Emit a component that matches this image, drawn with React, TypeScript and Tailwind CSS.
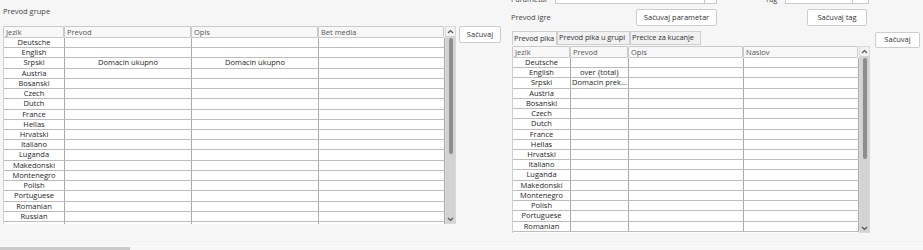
import React from "react";

const langs = [
  "Deutsche", "English", "Srpski", "Austria", "Bosanski", "Czech", "Dutch", "France", "Hellas",
  "Hrvatski", "Italiano", "Luganda", "Makedonski", "Montenegro", "Polish", "Portuguese", "Romanian", "Russian",
];

type Col = { title: string; w: string };

const groupCols: Col[] = [
  { title: "Jezik", w: "w-[61px]" },
  { title: "Prevod", w: "w-[127px]" },
  { title: "Opis", w: "w-[127px]" },
  { title: "Bet media", w: "w-[126px]" },
];

const gameCols: Col[] = [
  { title: "Jezik", w: "w-[58px]" },
  { title: "Prevod", w: "w-[58px]" },
  { title: "Opis", w: "w-[115px]" },
  { title: "Naslov", w: "w-[115px]" },
];

// values by language, one entry per column after Jezik
const groupData: Record<string, string[]> = {
  Srpski: ["Domacin ukupno", "Domacin ukupno", ""],
};
const gameData: Record<string, string[]> = {
  English: ["over {total}", "", ""],
  Srpski: ["Domacin prek...", "", ""],
};

function Chevron({ down }: { down?: boolean }) {
  return (
    <svg width="7" height="5" viewBox="0 0 7 5" className="shrink-0">
      <path
        d={down ? "M1 1 L3.5 3.5 L6 1" : "M1 4 L3.5 1.5 L6 4"}
        fill="none"
        stroke="#555"
        strokeWidth="1.2"
      />
    </svg>
  );
}

function ScrollBar({ thumb }: { thumb: string }) {
  return (
    <div className="flex w-[11px] shrink-0 flex-col items-center border border-[#d9d9d9] bg-[#d3d3d3]">
      <div className="flex h-[9px] w-full items-center justify-center bg-[#f2f2f2]">
        <Chevron />
      </div>
      <div className={`w-[4px] rounded-[2px] bg-[#8d8d8d] ${thumb}`} />
      <div className="flex-1" />
      <div className="flex h-[8px] w-full items-center justify-center">
        <Chevron down />
      </div>
    </div>
  );
}

function Grid({
  cols,
  data,
  rows,
  bodyH,
  thumb,
}: {
  cols: Col[];
  data: Record<string, string[]>;
  rows: string[];
  bodyH: string;
  thumb: string;
}) {
  return (
    <div className="flex">
      <div className="flex flex-col">
        {/* header */}
        <div className="flex h-[12px]">
          {cols.map((c) => (
            <div
              key={c.title}
              className={`${c.w} rounded-[1px] border border-[#cacaca] bg-[#f8f8f8] pl-[2px] text-[7.5px] leading-[10px] text-[#555]`}
            >
              {c.title}
            </div>
          ))}
        </div>
        {/* body */}
        <div className={`flex flex-col overflow-hidden border-l border-[#d0d0d0] bg-white ${bodyH}`}>
          {rows.map((lang, i) => {
            const vals = data[lang] ?? ["", "", ""];
            return (
              <div key={lang + i} className="flex h-[10.22px] shrink-0 border-b border-[#bdbdbd]">
                <div
                  className={`${cols[0].w} border-r border-[#ababab] text-center text-[7.5px] font-medium leading-[9px] text-[#1e1e1e]`}
                >
                  {lang}
                </div>
                {cols.slice(1).map((c, j) => (
                  <div
                    key={c.title}
                    className={`${c.w} overflow-hidden whitespace-nowrap border-r border-[#ababab] text-center text-[7.5px] font-medium leading-[9px] text-[#1e1e1e]`}
                  >
                    {vals[j]}
                  </div>
                ))}
              </div>
            );
          })}
        </div>
      </div>
      <ScrollBar thumb={thumb} />
    </div>
  );
}

function Button({ children, className }: { children: React.ReactNode; className: string }) {
  return (
    <button
      type="button"
      className={`flex items-center justify-center whitespace-nowrap rounded-[2px] border border-[#cdcdcd] bg-white text-[7.5px] text-[#333] ${className}`}
    >
      {children}
    </button>
  );
}

function Tab({ label, active, w }: { label: string; active?: boolean; w: string }) {
  return (
    <div
      className={`${w} flex h-[14px] items-center overflow-hidden whitespace-nowrap border border-[#cfcfcf] pl-[1px] text-[7.5px] tracking-[-0.1px] text-[#333] ${
        active ? "border-b-0 bg-[#f6f6f6]" : "bg-[#f1f1f1]"
      }`}
    >
      {label}
    </div>
  );
}

export default function App() {
  return (
    <div className="flex h-[250px] w-[923px] flex-col overflow-hidden bg-[#f6f6f6] font-['Open_Sans',sans-serif]">
      <div className="flex flex-1">
        {/* Prevod grupe */}
        <div className="flex w-[510px] shrink-0 flex-col pl-[3px]">
          <div className="mt-[6px] h-[10px] text-[7.5px] leading-[10px] text-[#444]">Prevod grupe</div>
          <div className="mt-[10px] flex items-start">
            <Grid cols={groupCols} data={groupData} rows={[...langs, ""]} bodyH="h-[186px]" thumb="mt-[2px] h-[116px]" />
            <Button className="ml-[3px] h-[17px] w-[42px]">Sačuvaj</Button>
          </div>
        </div>

        {/* Prevod igre */}
        <div className="flex flex-col">
          <div className="mt-[-10px] flex h-[14px] items-stretch">
            <div className="flex w-[45px] items-end pl-[1px] text-[7.5px] leading-[10px] text-[#444]">Parametar</div>
            <div className="w-[150px] border border-[#c9c9c9] bg-white pl-[3px] text-[7.5px] leading-[12px] text-[#222]">
              kombovoranai
            </div>
            <div className="w-[12px] border border-l-0 border-[#c9c9c9] bg-white" />
            <div className="w-[48px]" />
            <div className="flex w-[20px] items-end text-[7.5px] leading-[10px] text-[#444]">Tag</div>
            <div className="w-[68px] border border-[#c9c9c9] bg-white" />
            <div className="w-[16px] border border-l-0 border-[#c9c9c9] bg-white" />
          </div>

          <div className="mt-[5px] flex h-[17px] items-center">
            <div className="w-[126px] pl-[1px] text-[7.5px] text-[#444]">Prevod igre</div>
            <Button className="h-[17px] w-[81px]">Sačuvaj parametar</Button>
            <div className="w-[90px]" />
            <Button className="h-[17px] w-[60px]">Sačuvaj tag</Button>
          </div>

          <div className="mt-[5px] flex items-start">
            <div className="ml-[2px] flex flex-col">
              <div className="flex">
                <Tab label="Prevod pika" active w="w-[45px]" />
                <Tab label="Prevod pika u grupi" w="w-[73px]" />
                <Tab label="Precice za kucanje" w="w-[71px]" />
              </div>
              <div className="mt-[1px]">
                <Grid cols={gameCols} data={gameData} rows={langs.slice(0, 17)} bodyH="h-[175px]" thumb="mt-[2px] h-[101px]" />
              </div>
            </div>
            <Button className="ml-[5px] mt-[1px] h-[16px] w-[45px]">Sačuvaj</Button>
          </div>
        </div>
      </div>

      {/* window scroll strip */}
      <div className="flex h-[4px] flex-col border-t border-[#fdfdfd]">
        <div className="h-[3px] w-[130px] bg-[#c9c9c9]" />
      </div>
    </div>
  );
}
